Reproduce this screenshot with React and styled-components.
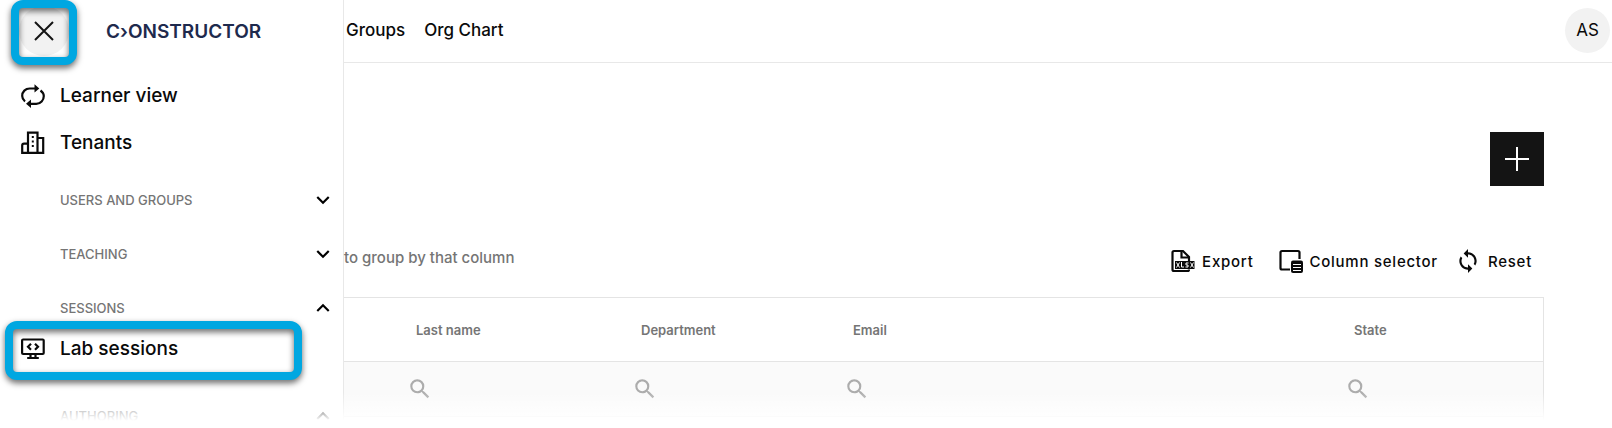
import React, { useState } from 'react';
import styled, { createGlobalStyle } from 'styled-components';
import { MdKeyboardArrowDown, MdKeyboardArrowUp, MdSearch, MdSync } from 'react-icons/md';

const columns = ['Last name', 'Department', 'Email', 'State'];

const App = () => {
  const [filters, setFilters] = useState({});

  const changeFilter = e => {
    const { name, value } = e.target;

    setFilters(prev => ({ ...prev, [name]: value }));
  };

  return (
    <Page>
      <GlobalStyle />

      <Sidebar>
        <SidebarHeader>
          <CloseBox>
            <CloseBtn type="button" aria-label="Close menu">
              <CloseIcon />
            </CloseBtn>
            <CloseHighlight />
          </CloseBox>
          <Logo href="#">C›ONSTRUCTOR</Logo>
        </SidebarHeader>

        <Menu>
          <MenuItem href="#">
            <LearnerIcon />
            Learner view
          </MenuItem>
          <MenuItem href="#">
            <TenantsIcon />
            Tenants
          </MenuItem>

          <Sections>
            <Section>
              <SectionBtn type="button" aria-expanded="false">
                Users and groups
                <MdKeyboardArrowDown />
              </SectionBtn>
            </Section>
            <Section>
              <SectionBtn type="button" aria-expanded="false">
                Teaching
                <MdKeyboardArrowDown />
              </SectionBtn>
            </Section>
            <Section $open>
              <SectionBtn type="button" aria-expanded="true">
                Sessions
                <MdKeyboardArrowUp />
              </SectionBtn>
              <MenuItem href="#">
                <LabIcon />
                Lab sessions
                <ItemHighlight />
              </MenuItem>
            </Section>
            <Section $open>
              <SectionBtn type="button" aria-expanded="true">
                Authoring
                <MdKeyboardArrowUp />
              </SectionBtn>
            </Section>
          </Sections>
        </Menu>
      </Sidebar>

      <Main>
        <TopBar>
          <TopNav>
            <TopLink href="#">Groups</TopLink>
            <TopLink href="#">Org Chart</TopLink>
          </TopNav>
          <Avatar type="button">AS</Avatar>
        </TopBar>

        <Content>
          <AddBtn type="button" aria-label="Add">
            <PlusIcon />
          </AddBtn>

          <Toolbar>
            <GroupHint>to group by that column</GroupHint>
            <Actions>
              <ActionBtn type="button">
                <ExportIcon />
                Export
              </ActionBtn>
              <ActionBtn type="button">
                <ColumnsIcon />
                Column selector
              </ActionBtn>
              <ActionBtn type="button">
                <MdSync size={26} />
                Reset
              </ActionBtn>
            </Actions>
          </Toolbar>

          <Table>
            <colgroup>
              <Col $width={60} />
              <Col $width={225} />
              <Col $width={212} />
              <Col />
              <Col $width={201} />
            </colgroup>
            <thead>
              <tr>
                <HeadCell />
                {columns.map(column => (
                  <HeadCell key={column} scope="col">
                    {column}
                  </HeadCell>
                ))}
              </tr>
            </thead>
            <tbody>
              <tr>
                <FilterCell />
                {columns.map(column => (
                  <FilterCell key={column}>
                    <FilterLabel>
                      <MdSearch size={26} />
                      <FilterInput
                        type="text"
                        name={column}
                        aria-label={`Search ${column}`}
                        value={filters[column] || ''}
                        onChange={changeFilter}
                      />
                    </FilterLabel>
                  </FilterCell>
                ))}
              </tr>
              <tr>
                <EmptyCell colSpan={5} />
              </tr>
            </tbody>
          </Table>
        </Content>
      </Main>

      <BottomFade />
    </Page>
  );
};

export default App;

const CloseIcon = () => (
  <svg width="20" height="20" viewBox="0 0 20 20" fill="none" stroke="#141414" strokeWidth="2">
    <path d="M1 1l18 18M19 1L1 19" />
  </svg>
);

const PlusIcon = () => (
  <svg width="24" height="24" viewBox="0 0 24 24" fill="none" stroke="#fff" strokeWidth="2">
    <path d="M12 0v24M0 12h24" />
  </svg>
);

const LearnerIcon = () => (
  <svg width="24" height="24" viewBox="0 0 24 24" fill="none" stroke="currentColor" strokeWidth="2.2">
    <path d="M4 17.5C2.200 16 1.200 14.300 1.200 12c0-4.300 3.200-7.500 7.500-7.500H14" />
    <path d="M19.500 6.500c2 1.500 3.300 3.200 3.300 5.500 0 4.300-3.200 7.900-7.500 7.900H9.500" />
    <path d="M13.500 .2v8.400l4.800-4.200zM10 15.600v8.400L5 19.800z" fill="currentColor" stroke="none" />
  </svg>
);

const TenantsIcon = () => (
  <svg width="24" height="24" viewBox="0 0 24 24" fill="none" stroke="currentColor" strokeWidth="2.2">
    <path d="M7 21.900V1.600h9.500v20.300M1.200 21.900V14.500q0-1.800 1.800-1.800H7M16.500 7h5.700v14.900M.1 21.900h23.200" />
    <path d="M10.800 6h2M10.800 10.500h2M10.800 15h2" />
  </svg>
);

const LabIcon = () => (
  <svg width="24" height="24" viewBox="0 0 24 24" fill="none" stroke="currentColor" strokeWidth="2.2">
    <rect x="1.1" y="2.500" width="21.600" height="14.500" rx="1" />
    <path d="M10 6.800L7 9.800l3 3M14 6.800l3 3-3 3M9.500 17v4M14.500 17v4M6.200 21h11.600" />
  </svg>
);

const ExportIcon = () => (
  <svg width="24" height="24" viewBox="0 0 24 24" fill="none" stroke="currentColor" strokeWidth="2.2">
    <path d="M18 12V8l-6-6H3Q1.500 2 1.500 3.500v17Q1.500 22 3 22h13.500q1.500 0 1.500-1.500" />
    <path d="M10.500 2v6.500H18" />
    <rect x="4" y="12" width="19.500" height="8" fill="currentColor" stroke="none" />
    <path
      d="M5.500 13.500l3 5M8.500 13.500l-3 5M10.500 13v5h2.500M17.500 14h-2.500v2h2v2h-2.500M19.500 13.500l3 5M22.500 13.500l-3 5"
      stroke="#fff"
      strokeWidth="1"
    />
  </svg>
);

const ColumnsIcon = () => (
  <svg width="24" height="24" viewBox="0 0 24 24" fill="none" stroke="currentColor" strokeWidth="2.2">
    <path d="M20.500 10V3.500q0-1.500-1.500-1.500H3Q1.500 2 1.500 3.500v15.500q0 1.500 1.500 1.500h8" />
    <rect x="12" y="11.500" width="12" height="12.500" rx="2" fill="currentColor" stroke="none" />
    <path d="M14 15.500h8M14 18.500h8M14 21.500h8" stroke="#fff" strokeWidth="1" />
  </svg>
);

const GlobalStyle = createGlobalStyle`
  * {
    box-sizing: border-box;
  }

  body {
    margin: 0;
    background: #fff;
    color: #0a0a0a;
    font-family: Inter, 'Liberation Sans', sans-serif;
  }

  button,
  input {
    padding: 0;
    border: none;
    background: none;
    color: inherit;
    font: inherit;
  }

  button {
    cursor: pointer;
  }

  a {
    color: inherit;
    text-decoration: none;
  }

  svg {
    flex-shrink: 0;
  }
`;

const Page = styled.div`
  position: relative;
  display: flex;
  height: 100vh;
  overflow: hidden;
`;

const Sidebar = styled.aside`
  flex: 0 0 344px;
  border-right: 1px solid #e8e8e8;
`;

const SidebarHeader = styled.div`
  display: flex;
  align-items: center;
  gap: 37px;
  height: 62px;
  padding-left: 19px;
`;

const CloseBox = styled.div`
  position: relative;
`;

const CloseBtn = styled.button`
  display: flex;
  align-items: center;
  justify-content: center;
  width: 50px;
  height: 50px;
  border-radius: 50%;
  background: #f2f2f2;
`;

const Highlight = styled.span`
  position: absolute;
  border: 8px solid #00a7e1;
  border-radius: 12px;
  filter: drop-shadow(0 3px 3px rgba(0, 0, 0, 0.6));
  pointer-events: none;
`;

const CloseHighlight = styled(Highlight)`
  inset: -6px -8px -9px;
`;

const ItemHighlight = styled(Highlight)`
  inset: -4px 41px -8px 5px;
`;

const Logo = styled.a`
  color: #1e2a4d;
  font-size: 19px;
  font-weight: 600;
`;

const Menu = styled.nav`
  padding-top: 10px;
`;

const MenuItem = styled.a`
  position: relative;
  display: flex;
  align-items: center;
  gap: 15px;
  height: 47px;
  padding-left: 21px;
  font-size: 19px;
  font-weight: 500;
`;

const Sections = styled.div`
  display: flex;
  flex-direction: column;
  gap: 20px;
  padding-top: 17px;
`;

const Section = styled.div`
  padding-bottom: ${({ $open }) => ($open ? '7px' : '0')};
`;

const SectionBtn = styled.button`
  display: flex;
  align-items: center;
  justify-content: space-between;
  width: 100%;
  height: 34px;
  padding: 0 7px 0 60px;
  color: #757575;
  font-size: 13px;
  font-weight: 500;
  text-transform: uppercase;

  svg {
    width: 26px;
    height: 26px;
    color: #000;
  }
`;

const Main = styled.main`
  flex: 1;
  min-width: 0;
`;

const TopBar = styled.header`
  display: flex;
  align-items: center;
  justify-content: space-between;
  height: 63px;
  padding: 0 2px 2px;
  border-bottom: 1px solid #e8e8e8;
`;

const TopNav = styled.nav`
  display: flex;
  gap: 19px;
`;

const TopLink = styled.a`
  font-size: 17px;
  font-weight: 500;
`;

const Avatar = styled.button`
  width: 45px;
  height: 45px;
  border-radius: 50%;
  background: #f2f2f2;
  font-size: 17px;
`;

const Content = styled.div`
  display: flex;
  flex-direction: column;
  padding: 69px 68px 0 0;
`;

const AddBtn = styled.button`
  display: flex;
  align-items: center;
  justify-content: center;
  align-self: flex-end;
  width: 54px;
  height: 54px;
  background: #141414;
`;

const Toolbar = styled.div`
  display: flex;
  align-items: flex-start;
  justify-content: space-between;
  height: 111px;
  padding: 60px 12px 0 0;
`;

const GroupHint = styled.p`
  margin: 0;
  color: #757575;
  font-size: 15px;
  font-weight: 500;
  line-height: 24px;
  white-space: nowrap;
`;

const Actions = styled.div`
  display: flex;
  gap: 17px;
  padding-top: 1px;
`;

const ActionBtn = styled.button`
  display: flex;
  align-items: center;
  gap: 7px;
  height: 28px;
  font-size: 15px;
  font-weight: 500;
  letter-spacing: 0.05em;
  white-space: nowrap;

  &:first-child {
    margin-right: 8px;
  }
`;

const Table = styled.table`
  width: 100%;
  table-layout: fixed;
  border-collapse: separate;
  border-spacing: 0;
  border-top: 1px solid #e4e4e4;
  border-right: 1px solid #e4e4e4;
`;

const Col = styled.col`
  width: ${({ $width }) => ($width ? `${$width}px` : 'auto')};
`;

const HeadCell = styled.th`
  height: 64px;
  padding: 0 12px;
  border-bottom: 1px solid #e4e4e4;
  color: #757575;
  font-size: 13px;
  font-weight: 600;
  text-align: left;
`;

const FilterCell = styled.td`
  height: 55px;
  padding: 0 3px;
  border-bottom: 1px solid #e4e4e4;
  background: #fafafa;
`;

const FilterLabel = styled.label`
  display: flex;
  align-items: center;
  gap: 8px;
  color: #acacac;
`;

const FilterInput = styled.input`
  flex: 1;
  min-width: 0;
  height: 32px;
  outline: none;
  color: #141414;
  font-size: 15px;
`;

const EmptyCell = styled.td`
  height: 55px;
`;

const BottomFade = styled.div`
  position: absolute;
  right: 0;
  bottom: 0;
  left: 0;
  height: 36px;
  background: linear-gradient(rgba(255, 255, 255, 0), #fff 80%);
  pointer-events: none;
`;
